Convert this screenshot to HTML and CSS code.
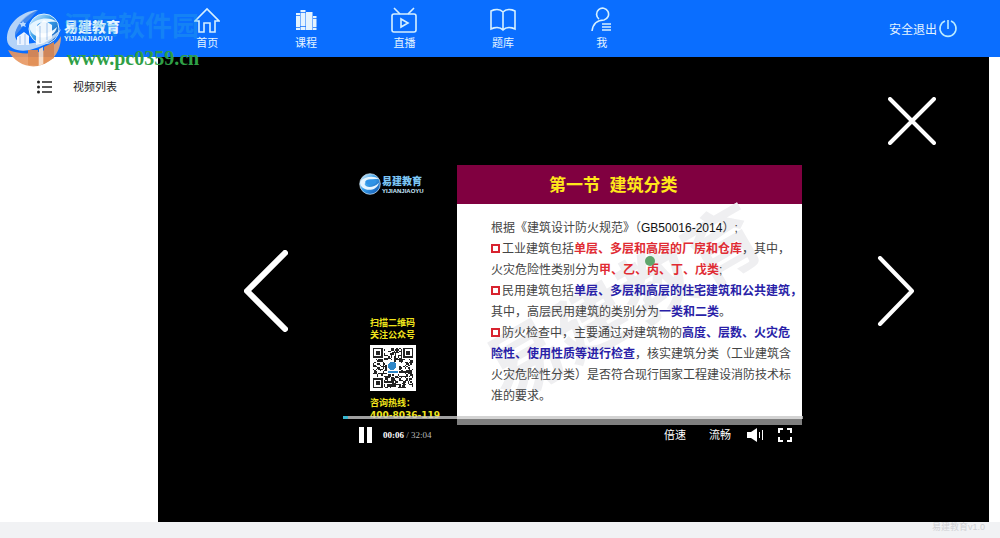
FILE: index.html
```html
<!DOCTYPE html>
<html lang="zh-CN">
<head>
<meta charset="utf-8">
<title>易建教育</title>
<link rel="stylesheet" href="styles.css">
</head>
<body>
<svg class="defs" aria-hidden="true">
  <defs>
    <linearGradient id="ball" x1="0" y1="0" x2="1" y2="1">
      <stop offset="0" stop-color="#e8f7ff"/><stop offset=".45" stop-color="#3aa0ea"/><stop offset="1" stop-color="#0b4fae"/>
    </linearGradient>
    <linearGradient id="ring" x1="0" y1="0" x2="1" y2="0">
      <stop offset="0" stop-color="#e8935c"/><stop offset="1" stop-color="#e9a878"/>
    </linearGradient>
    <symbol id="globe" viewBox="0 0 32 32">
      <circle cx="16" cy="16" r="15" fill="url(#ball)"/>
      <path d="M2 12C8 5 22 3 29 9C22 8 12 10 8 16C10 22 21 22 29 14C27 24 13 28 5 21C2 18 1 15 2 12Z" fill="#e6f5ff"/>
      <ellipse cx="17" cy="13" rx="8" ry="4" fill="#2f93e6"/>
      <circle cx="16" cy="16" r="15" fill="none" stroke="#d8efff" stroke-width="1"/>
    </symbol>
  </defs>
</svg>

<header class="topbar">
  <a class="brand" href="#">
    <svg class="brand-globe" aria-hidden="true"><use href="#globe"/></svg>
    <span class="brand-text"><strong>易建教育</strong><small>YIJIANJIAOYU</small></span>
  </a>
  <nav class="nav">
    <a href="#">
      <svg viewBox="0 0 26 26"><path d="M1 14L13 2L25 14H21V25H16V16H10V25H5V14Z"/></svg>
      <span>首页</span>
    </a>
    <a href="#">
      <svg viewBox="0 0 26 26"><path class="solid" d="M3 6h4v2h-4zM3 8.700h4v11.600h-4zM3 21h4v2h-4zM7.500 3h5v2h-5zM7.500 5.700h5v13.600h-5zM7.500 20h5v3h-5zM13 5h6.500v18h-6.500zM20 9h3.500v2h-3.500zM20 11.700h3.500v8.300h-3.500zM20 20.700h3.500v2.300h-3.500z"/></svg>
      <span>课程</span>
    </a>
    <a href="#">
      <svg viewBox="0 0 26 26"><rect x="1" y="7" width="24" height="18" rx="2"/><path d="M3 1L9 7M23 1L17 7M10 12V20L17 16Z"/></svg>
      <span>直播</span>
    </a>
    <a href="#">
      <svg viewBox="0 0 26 26"><path d="M13 5C10 2 5 2 1 4V22C5 20 10 20 13 23C16 20 21 20 25 22V4C21 2 16 2 13 5ZM13 5V23"/></svg>
      <span>题库</span>
    </a>
    <a href="#">
      <svg viewBox="0 0 26 26"><path d="M10 12A6 6 0 1 1 15 13C8 13 4 17 3 24M13 17H22M13 20H22M13 23H22"/></svg>
      <span>我</span>
    </a>
  </nav>
  <a class="logout" href="#">安全退出
    <svg viewBox="0 0 20 20"><path d="M7 2A8 8 0 1 0 13 2M10 1V10"/></svg>
  </a>
  <div class="stamp" aria-hidden="true">
    <svg class="stamp-logo" viewBox="0 0 58 58">
      <path d="M2 41C8 53 20 59 32 57C46 54 55 43 55 27C49 40 26 50 2 41Z" fill="url(#ring)"/>
      <path d="M32 1C14 2 0 16 1 31C2 41 16 44 27 40C42 36 53 27 55 20C46 29 28 37 15 34C2 29 12 10 32 1Z" fill="#c3dcf8"/>
      <path d="M32 1C20 5 10 14 9 27L20 14L26 8Z" fill="#6f9fe0" fill-opacity=".6"/>
      <path d="M11 36V28L18 23L23 27V36ZM30 36V18L38 11L46 16V29L38 34Z" fill="#fff"/>
      <path d="M14 35V27M19 36V25M34 34V17M41 31V14" stroke="#a9c6ec" stroke-width="1"/>
      <path d="M22 41H32V57L22 56ZM38 38L48 33V49L38 55Z" fill="#e0884c"/>
      <path d="M33 40L37 38V55L33 57Z" fill="#f7dcc6"/>
      <path d="M17 12l1 2h2l-1 2 1 2-3-1-2 1v-2l-2-2h3z" fill="#c9e5ff"/>
    </svg>
    <span class="stamp-name">河东软件园</span>
    <span class="stamp-url">www.pc0359.cn</span>
  </div>
</header>

<main class="main">
  <aside class="sidebar">
    <a href="#">
      <svg viewBox="0 0 15 14"><path d="M5 2H15M5 7H15M5 12H15"/><circle cx="1.500" cy="2" r="1.500"/><circle cx="1.500" cy="7" r="1.500"/><circle cx="1.500" cy="12" r="1.500"/></svg>
      <span>视频列表</span>
    </a>
  </aside>

  <section class="stage">
    <button class="close" aria-label="关闭"><svg viewBox="0 0 48 48"><path d="M2 2L46 46M46 2L2 46"/></svg></button>
    <button class="prev" aria-label="上一个"><svg viewBox="0 0 44 82"><path d="M41 3L3 41L41 79"/></svg></button>

    <div class="player">
      <div class="frame">
        <div class="frame-side">
          <div class="mini-brand">
            <svg aria-hidden="true"><use href="#globe"/></svg>
            <span><strong>易建教育</strong><small>YIJIANJIAOYU</small></span>
          </div>
          <div class="contact">
            <p>扫描二维码<br>关注公众号</p>
            <svg class="qr" id="qr" viewBox="0 0 33 33" shape-rendering="crispEdges"></svg>
            <p>咨询热线：<br><span class="phone">400-8036-119</span></p>
          </div>
        </div>
        <article class="slide">
          <h1>第一节&nbsp; 建筑分类</h1>
          <span class="slide-mark" aria-hidden="true">易建教育</span>
          <div class="slide-text">
            <p>根据《建筑设计防火规范》（<span class="code">GB50016-2014</span>）;</p>
            <p><i class="box"></i>工业建筑包括<b class="red">单层、多层和高层的厂房和仓库</b>，其中，</p>
            <p>火灾危险性类别分为<b class="red">甲、乙、丙、丁、戊类</b>;</p>
            <p><i class="box"></i>民用建筑包括<b class="blue">单层、多层和高层的住宅建筑和公共建筑，</b></p>
            <p>其中，高层民用建筑的类别分为<b class="blue">一类和二类</b>。</p>
            <p><i class="box"></i>防火检查中，主要通过对建筑物的<b class="blue">高度、层数、火灾危</b></p>
            <p><b class="blue">险性、使用性质等进行检查</b>，核实建筑分类（工业建筑含</p>
            <p>火灾危险性分类）是否符合现行国家工程建设消防技术标</p>
            <p>准的要求。</p>
          </div>
          <span class="pointer"></span>
        </article>
      </div>
      <div class="controls">
        <div class="progress"><div class="played" style="width: 1%"></div></div>
        <div class="buttons">
          <button aria-label="暂停"><svg class="pause" viewBox="0 0 13 16"><path d="M0 0H5V16H0ZM8 0H13V16H8Z"/></svg></button>
          <span class="time"><b>00:06</b> / 32:04</span>
          <button class="text-btn rate">倍速</button>
          <button class="text-btn">流畅</button>
          <button aria-label="音量"><svg class="volume" viewBox="0 0 17 14"><path d="M0 4H4L10 0V14L4 10H0ZM12 4H13V10H12ZM15 2H16V12H15Z"/></svg></button>
          <button aria-label="全屏"><svg class="full" viewBox="0 0 14 14"><path d="M0 0H5V2H2V5H0ZM9 0H14V5H12V2H9ZM0 9H2V12H5V14H0ZM12 9H14V14H9V12H12Z"/></svg></button>
        </div>
      </div>
    </div>

    <button class="next" aria-label="下一个"><svg viewBox="0 0 38 70"><path d="M3 2L35 35L3 68"/></svg></button>
  </section>
</main>

<footer class="footer">易建教育v1.0</footer>
<script src="qr.js"></script>
</body>
</html>
```

FILE: styles.css
```css
* { box-sizing: border-box; }

body {
  margin: 0;
  min-height: 100vh;
  display: flex;
  flex-direction: column;
  background: #fff;
  font-family: "Liberation Sans", "Noto Sans CJK SC", sans-serif;
  color: #222;
}

p, h1 { margin: 0; }
a { color: inherit; text-decoration: none; }
svg { display: block; }
button { border: 0; padding: 0; background: none; color: inherit; font: inherit; cursor: pointer; }
.defs { position: absolute; width: 0; height: 0; }

/* Top bar */
.topbar {
  position: relative;
  z-index: 1;
  display: flex;
  align-items: center;
  height: 57px;
  padding-right: 42px;
  background: #0a6eff;
  color: #e4f4ff;
}
.brand { display: flex; align-items: center; gap: 4px; width: 158px; padding-left: 28px; height: 52px; }
.brand-globe { width: 32px; height: 32px; }
.brand-text { display: flex; flex-direction: column; padding-top: 4px; }
.brand-text strong { font-size: 14px; line-height: 15px; font-weight: 900; }
.brand-text small { font-size: 7px; line-height: 7px; font-weight: bold; }

.nav { display: flex; width: 493px; }
.nav a { flex: 1; display: flex; flex-direction: column; align-items: center; gap: 2px; font-size: 11px; line-height: 16px; }
.nav svg { width: 26px; height: 26px; fill: none; stroke: #d6f0ff; stroke-width: 1.6; }
.nav .solid { fill: #e4f4ff; stroke: none; }

.logout { display: flex; align-items: center; gap: 1px; margin-left: auto; font-size: 12px; }
.logout svg { width: 20px; height: 20px; fill: none; stroke: #b9eaff; stroke-width: 1.6; }

.stamp { position: absolute; left: 6px; top: 9px; pointer-events: none; }
.stamp-logo { width: 58px; height: 58px; opacity: 0.92; }
.stamp-name { position: absolute; left: 58px; top: 0; font-size: 27px; line-height: 36px; font-weight: bold; color: #2bb0e0; opacity: 0.3; white-space: nowrap; }
.stamp-url { position: absolute; left: 61px; top: 37px; font: bold 20px/24px "Liberation Serif", serif; color: #2f9f46; }

/* Main area */
.main { flex: 1; display: flex; padding-right: 11px; }
.sidebar { width: 158px; padding: 20px 0 0 37px; font-size: 11px; }
.sidebar a { display: flex; align-items: center; gap: 21px; line-height: 20px; }
.sidebar svg { width: 15px; height: 14px; stroke: #222; stroke-width: 1.4; }
.sidebar circle { stroke: none; fill: #222; }

.stage {
  position: relative;
  flex: 1;
  display: flex;
  align-items: center;
  padding: 3px 74px 0 86px;
  background: #000;
  color: #fff;
}
.stage > button svg { fill: none; stroke: #fff; stroke-linecap: round; stroke-linejoin: round; }
.prev svg { width: 44px; height: 82px; stroke-width: 6; }
.next svg { width: 38px; height: 70px; stroke-width: 4; }
.close { position: absolute; top: 40px; right: 53px; }
.close svg { width: 48px; height: 48px; stroke-width: 4; }

/* Player */
.player { flex: 1; align-self: flex-start; margin: 105px 74px 0 55px; }
.frame { display: flex; height: 260px; padding-right: 1px; }
.frame-side { display: flex; flex-direction: column; justify-content: space-between; width: 114px; padding: 8px 0 4px 16px; }
.mini-brand { display: flex; align-items: center; gap: 1px; }
.mini-brand svg { width: 22px; height: 22px; }
.mini-brand span { display: flex; flex-direction: column; padding-top: 2px; color: #7cc6f5; }
.mini-brand strong { font-size: 10px; line-height: 12px; font-weight: 900; }
.mini-brand small { font-size: 6px; line-height: 6px; font-weight: bold; color: #cdeaff; }
.contact { padding-left: 11px; font-size: 9px; line-height: 12px; font-weight: bold; color: #f0e51c; }
.qr { width: 46px; height: 46px; margin: 4px 0 6px; }
.phone { font-family: "DejaVu Sans", sans-serif; }

.slide { position: relative; flex: 1; overflow: hidden; background: #fff; color: #444; }
.slide h1 { padding: 2px 0 0 92px; background: #800040; color: #ffe81a; font-size: 17px; line-height: 37px; font-weight: bold; }
.slide-mark { position: absolute; left: 16px; top: 94px; font-size: 76px; line-height: 90px; font-weight: bold; color: #efeff1; white-space: nowrap; transform: rotate(-30deg); }
.slide-text { position: relative; padding: 14px 0 0 34px; font-size: 12px; line-height: 21px; white-space: nowrap; }
.slide-text p { height: 21px; }
.code { color: #111; }
.red { color: #e02b33; }
.blue { color: #2a1fa8; }
.box { display: inline-block; width: 9px; height: 9px; margin-right: 2px; border: 2px solid #d8232f; }
.pointer { position: absolute; left: 188px; top: 91px; width: 10px; height: 10px; border-radius: 50%; background: #5fa56c; }

.controls { position: relative; margin-top: -9px; }
.progress { height: 3px; background: rgba(200, 200, 200, 0.8); }
.played { height: 3px; background: #37b6cf; }
.buttons { display: flex; align-items: center; height: 32px; padding: 0 11px 0 16px; background: rgba(0, 0, 0, 0.5); }
.buttons svg { fill: #fff; }
.pause { width: 13px; height: 16px; }
.volume { width: 17px; height: 14px; }
.full { width: 14px; height: 14px; margin-left: 14px; }
.time { margin-left: 11px; font: 9px/12px "Liberation Serif", serif; color: #bbb; }
.time b { color: #fff; }
.text-btn { margin-right: 16px; font-size: 11px; line-height: 16px; }
.rate { margin-left: auto; margin-right: 23px; }

.footer { height: 16px; padding-right: 15px; background: #f1f2f4; color: #cfd0d3; font-size: 9px; line-height: 11px; text-align: right; }
```

FILE: qr.js
```javascript
// Draws the 29x29 module code with a 2-module quiet zone.
var size = 29;
var seed = 7;
function rect(x, y, w, h, fill) {
  return '<rect x="' + x + '" y="' + y + '" width="' + w + '" height="' + h + '" fill="' + fill + '"/>';
}
function finder(x, y) {
  return rect(x - 1, y - 1, 9, 9, '#fff') + rect(x, y, 7, 7, '#222') +
    rect(x + 1, y + 1, 5, 5, '#fff') + rect(x + 2, y + 2, 3, 3, '#222');
}
var out = rect(0, 0, 33, 33, '#fff');
for (var y = 0; y < size; y++) {
  for (var x = 0; x < size; x++) {
    seed = (seed * 16807) % 2147483647;
    if (seed / 2147483647 < 0.52) out += rect(x + 2, y + 2, 1, 1, '#222');
  }
}
out += finder(2, 2) + finder(24, 2) + finder(2, 24);
out += rect(12, 12, 9, 9, '#fff') + '<circle cx="16" cy="15" r="3" fill="#2d86c8"/>' + rect(13, 19, 7, 1, '#2d86c8');
document.getElementById('qr').innerHTML = out;
```
